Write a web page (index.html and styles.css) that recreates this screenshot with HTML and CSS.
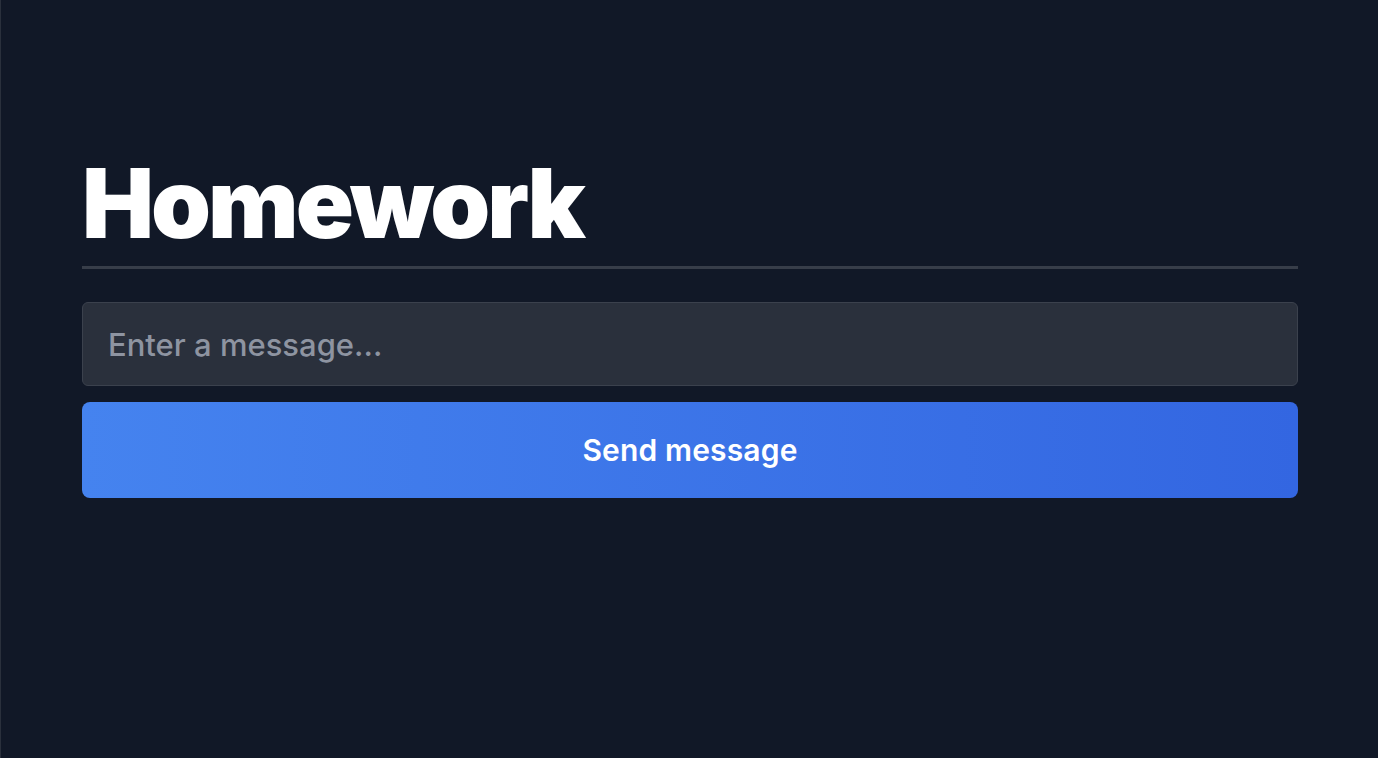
FILE: index.html
```html
<!DOCTYPE html>
<html lang="en">
<head>
<meta charset="utf-8">
<title>Homework</title>
<link rel="stylesheet" href="styles.css">
</head>
<body>
<main class="page">
  <h1 class="title">Homework</h1>
  <form class="form">
    <input class="field" type="text" placeholder="Enter a message...">
    <button class="send" type="button">Send message</button>
  </form>
</main>
</body>
</html>
```
FILE: styles.css
```css
html, body {
  margin: 0;
  padding: 0;
  height: 100%;
}
body {
  background: #111827;
  font-family: Inter, "Noto Sans", sans-serif;
  border-left: 1px solid #2a303c;
  box-sizing: border-box;
}
.page {
  padding: 155px 80px 0 81px;
  display: flex;
  flex-direction: column;
}
.title {
  margin: 0;
  font-size: 96px;
  line-height: 1;
  font-weight: 900;
  color: #ffffff;
  letter-spacing: -0.031em;
  padding-bottom: 15px;
  border-bottom: 3px solid #373d49;
}
.form {
  margin-top: 33px;
  display: flex;
  flex-direction: column;
  gap: 16px;
}
.field {
  box-sizing: border-box;
  height: 84px;
  padding: 0 25px;
  background: #2a303c;
  border: 1px solid #3b414d;
  border-radius: 6px;
  color: #e5e7eb;
  font-family: Inter, "Noto Sans", sans-serif;
  font-size: 31px;
  font-weight: 500;
  outline: none;
}
.field::placeholder {
  color: #8e94a1;
}
.send {
  height: 96px;
  border: 0;
  border-radius: 8px;
  background: linear-gradient(90deg, #4583ef 0%, #3366e1 100%);
  color: #ffffff;
  font-family: Inter, "Noto Sans", sans-serif;
  font-size: 30px;
  font-weight: 600;
  letter-spacing: 0.005em;
  cursor: pointer;
}
```
